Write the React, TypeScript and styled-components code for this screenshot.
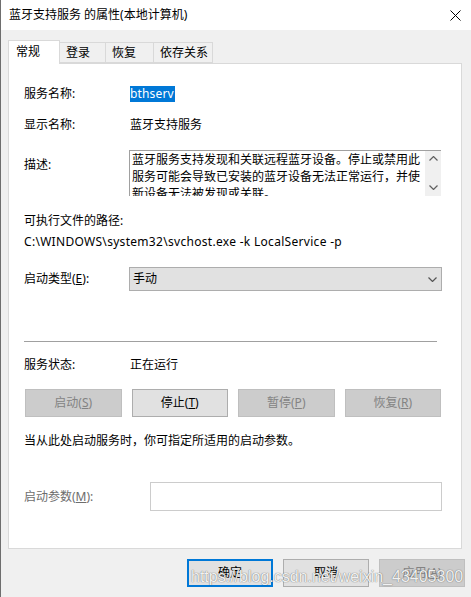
import React from 'react';
import styled, { createGlobalStyle } from 'styled-components';

const GlobalStyle = createGlobalStyle`
    html, body {
        margin: 0;
        padding: 0;
        background: #f0f0f0;
    }

    body {
        font-family: "Noto Sans", "Noto Sans CJK SC", sans-serif;
        font-size: 12px;
        line-height: 18px;
        color: #000000;
    }
`;

const Window = styled.div`
    position: relative;
    width: 471px;
    height: 597px;
    box-sizing: border-box;
    display: flex;
    flex-direction: column;
    background: #f0f0f0;
    border-left: 1px solid #6e6e6e;
    overflow: hidden;
`;

const TitleBar = styled.div`
    flex: none;
    height: 30px;
    display: flex;
    align-items: center;
    justify-content: space-between;
    padding: 0 10px 0 8px;
    background: #ffffff;
`;

const Title = styled.span`
    font-size: 12px;
`;

const Content = styled.div`
    padding: 10px 0 0 7px;
`;

const TabStrip = styled.div`
    display: flex;
    align-items: flex-end;
    height: 23px;
`;

const Tab = styled.div<{ $width: number; $active?: boolean }>`
    position: relative;
    z-index: ${p => (p.$active ? 1 : 0)};
    box-sizing: border-box;
    width: ${p => p.$width}px;
    height: ${p => (p.$active ? 24 : 21)}px;
    margin-bottom: ${p => (p.$active ? -1 : 0)}px;
    padding: ${p => (p.$active ? '2px 0 0 7px' : '1px 0 0 6px')};
    border: 1px solid #d9d9d9;
    border-left-width: ${p => (p.$active ? 1 : 0)}px;
    border-bottom: ${p => (p.$active ? 'none' : '1px solid #d9d9d9')};
    background: ${p => (p.$active ? '#ffffff' : '#f0f0f0')};
    line-height: 18px;
`;

const Panel = styled.div`
    position: relative;
    box-sizing: border-box;
    width: 454px;
    height: 486px;
    padding: 0 20px 0 15px;
    border: 1px solid #d9d9d9;
    background: #ffffff;
`;

const FieldRow = styled.div<{ $top: number; $label?: number; $start?: boolean }>`
    display: grid;
    grid-template-columns: ${p => p.$label ?? 106}px 1fr;
    align-items: ${p => (p.$start ? 'start' : 'center')};
    margin-top: ${p => p.$top}px;
`;

const Label = styled.span<{ $muted?: boolean; $pad?: number }>`
    color: ${p => (p.$muted ? '#6d6d6d' : '#000000')};
    padding-top: ${p => p.$pad ?? 0}px;
    line-height: 18px;
    white-space: nowrap;
`;

const Value = styled.span`
    line-height: 18px;
    white-space: nowrap;
`;

const Selected = styled.span`
    display: inline-block;
    padding: 0 1px 0 0;
    background: #0078d7;
    color: #ffffff;
    line-height: 16px;
    letter-spacing: 0.15px;
`;

const TextLine = styled.div<{ $top: number; $latin?: boolean }>`
    margin-top: ${p => p.$top}px;
    line-height: 18px;
    letter-spacing: ${p => (p.$latin ? '0.3px' : '0')};
    white-space: nowrap;
`;

const DescBox = styled.div`
    display: flex;
    height: 46px;
    margin-left: -1px;
    box-sizing: border-box;
    border-top: 1px solid #a0a0a0;
    border-left: 1px solid #a0a0a0;
    overflow: hidden;
`;

const DescText = styled.div`
    flex: 1;
    padding: 0 0 0 2px;
    line-height: 17px;
    word-break: break-all;
`;

const ScrollBar = styled.div`
    flex: none;
    width: 16px;
    display: flex;
    flex-direction: column;
    justify-content: space-between;
    align-items: center;
    padding: 5px 0 6px;
    background: #f0f0f0;
`;

const Dropdown = styled.div`
    box-sizing: border-box;
    height: 24px;
    display: flex;
    align-items: center;
    justify-content: space-between;
    padding: 0 4px 0 3px;
    margin: 0 -1px 0 -1px;
    border: 1px solid #adadad;
    background: #e1e1e1;
`;

const Separator = styled.div<{ $top: number }>`
    margin-top: ${p => p.$top}px;
    margin-right: 4px;
    height: 1px;
    background: #a0a0a0;
`;

const ButtonRow = styled.div<{ $top: number }>`
    display: grid;
    grid-template-columns: repeat(4, 1fr);
    column-gap: 10px;
    margin: ${p => p.$top}px 0 0 1px;
`;

const WinButton = styled.div<{ $disabled?: boolean; $default?: boolean; $width?: number }>`
    box-sizing: border-box;
    width: ${p => (p.$width ? `${p.$width}px` : 'auto')};
    height: 28px;
    display: flex;
    align-items: center;
    justify-content: center;
    border: ${p => (p.$default ? '2px solid #0078d7' : p.$disabled ? '1px solid #bfbfbf' : '1px solid #adadad')};
    background: ${p => (p.$disabled ? '#cccccc' : '#e1e1e1')};
    color: ${p => (p.$disabled ? '#838383' : '#000000')};
    line-height: 18px;
`;

const ParamInput = styled.div`
    box-sizing: border-box;
    height: 29px;
    margin-right: -1px;
    border: 1px solid #cccccc;
    background: #ffffff;
`;

const ButtonBar = styled.div`
    display: flex;
    justify-content: flex-end;
    gap: 10px;
    margin-top: 10px;
    padding-right: 6px;
`;

const Watermark = styled.div`
    position: absolute;
    left: 190px;
    top: 567px;
    font-family: "Liberation Sans", Arial, sans-serif;
    font-size: 16px;
    line-height: 20px;
    color: rgba(255, 255, 255, 0.92);
    text-shadow: 0 0 1px rgba(70, 70, 70, 0.7), 0 0 1px rgba(70, 70, 70, 0.4);
    white-space: nowrap;
    pointer-events: none;
`;

const CloseIcon = () => (
    <svg width='11' height='11' viewBox='0 0 11 11'>
        <path d='M0.5 0.5 L10.5 10.5 M10.5 0.5 L0.5 10.5' stroke='#000' strokeWidth='1' fill='none' />
    </svg>
);

const Chevron = ({ up, color = '#606060' }: { up?: boolean; color?: string }) => (
    <svg width='9' height='5' viewBox='0 0 9 5'>
        <polyline
            points={ up ? '0.5,4.5 4.5,0.5 8.5,4.5' : '0.5,0.5 4.5,4.5 8.5,0.5' }
            stroke={ color }
            strokeWidth='1.2'
            fill='none'
        />
    </svg>
);

const tabs = [
    { name: '常规', width: 52, active: true },
    { name: '登录', width: 46 },
    { name: '恢复', width: 48 },
    { name: '依存关系', width: 59 }
];

const description =
    '蓝牙服务支持发现和关联远程蓝牙设备。停止或禁用此服务可能会导致已安装的蓝牙设备无法正常运行，并使新设备无法被发现或关联。';

export default function App() {
    return (
        <>
            <GlobalStyle />
            <Window>
                <TitleBar>
                    <Title>蓝牙支持服务 的属性(本地计算机)</Title>
                    <CloseIcon />
                </TitleBar>
                <Content>
                    <TabStrip>
                        { tabs.map(t => (
                            <Tab key={ t.name } $width={ t.width } $active={ t.active }>
                                { t.name }
                            </Tab>
                        )) }
                    </TabStrip>
                    <Panel>
                        <FieldRow $top={ 21 }>
                            <Label>服务名称:</Label>
                            <Value><Selected>bthserv</Selected></Value>
                        </FieldRow>
                        <FieldRow $top={ 13 }>
                            <Label>显示名称:</Label>
                            <Value>蓝牙支持服务</Value>
                        </FieldRow>
                        <FieldRow $top={ 16 } $start>
                            <Label $pad={ 6 }>描述:</Label>
                            <DescBox>
                                <DescText>{ description }</DescText>
                                <ScrollBar>
                                    <Chevron up />
                                    <Chevron />
                                </ScrollBar>
                            </DescBox>
                        </FieldRow>
                        <TextLine $top={ 16 }>可执行文件的路径:</TextLine>
                        <TextLine $top={ 3 } $latin>C:\WINDOWS\system32\svchost.exe -k LocalService -p</TextLine>
                        <FieldRow $top={ 16 }>
                            <Label>启动类型(<u>E</u>):</Label>
                            <Dropdown>
                                <span>手动</span>
                                <Chevron color='#555555' />
                            </Dropdown>
                        </FieldRow>
                        <Separator $top={ 50 } />
                        <FieldRow $top={ 14 }>
                            <Label>服务状态:</Label>
                            <Value>正在运行</Value>
                        </FieldRow>
                        <ButtonRow $top={ 15 }>
                            <WinButton $disabled>启动(<u>S</u>)</WinButton>
                            <WinButton>停止(<u>T</u>)</WinButton>
                            <WinButton $disabled>暂停(<u>P</u>)</WinButton>
                            <WinButton $disabled>恢复(<u>R</u>)</WinButton>
                        </ButtonRow>
                        <TextLine $top={ 15 }>当从此处启动服务时，你可指定所适用的启动参数。</TextLine>
                        <FieldRow $top={ 32 } $label={ 126 }>
                            <Label $muted>启动参数(<u>M</u>):</Label>
                            <ParamInput />
                        </FieldRow>
                    </Panel>
                    <ButtonBar>
                        <WinButton $default $width={ 86 }>确定</WinButton>
                        <WinButton $width={ 86 }>取消</WinButton>
                        <WinButton $disabled $width={ 86 }>应用(<u>A</u>)</WinButton>
                    </ButtonBar>
                </Content>
                <Watermark>https://blog.csdn.net/weixin_43405300</Watermark>
            </Window>
        </>
    );
}
